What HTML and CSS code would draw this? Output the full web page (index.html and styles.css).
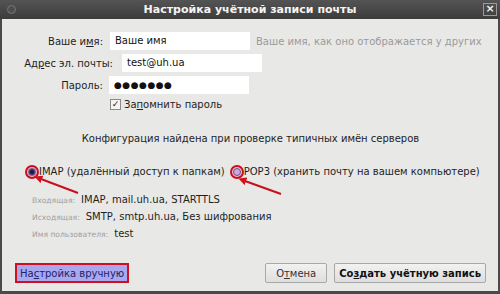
FILE: index.html
```html
<!DOCTYPE html>
<html lang="ru">
<head>
    <meta charset="UTF-8">
    <title>Настройка учётной записи почты</title>
    <link rel="stylesheet" href="styles.css">
</head>
<body>
    <div class="window">
        <div class="titlebar">
            <span class="win-dot"></span>
            <span class="win-title">Настройка учётной записи почты</span>
            <span class="win-close">×</span>
        </div>

        <div class="content">
            <div class="form">
                <div class="row row-name">
                    <label class="lbl">Ваше и<u>м</u>я:</label>
                    <div class="field">Ваше имя</div>
                    <span class="hint">Ваше имя, как оно отображается у других</span>
                </div>
                <div class="row row-mail">
                    <label class="lbl">Ад<u>р</u>ес эл. почты:</label>
                    <div class="field">test@uh.ua</div>
                </div>
                <div class="row row-pass">
                    <label class="lbl">Пароль:</label>
                    <div class="field dots">●●●●●●●</div>
                </div>
                <div class="row row-check">
                    <span class="check">✓</span>
                    <span>За<u>п</u>омнить пароль</span>
                </div>
            </div>

            <p class="status">Конфигурация найдена при проверке типичных имён серверов</p>

            <div class="protocols">
                <label class="radio-item">
                    <span class="radio checked"></span>IMAP (удалённый доступ к папкам)
                </label>
                <label class="radio-item pop">
                    <span class="radio"></span>POP3 (хранить почту на вашем компьютере)
                </label>
            </div>

            <div class="servers">
                <div class="srv"><span class="srv-key">Входящая:</span><span>IMAP, mail.uh.ua, STARTTLS</span></div>
                <div class="srv"><span class="srv-key">Исходящая:</span><span>SMTP, smtp.uh.ua, Без шифрования</span></div>
                <div class="srv"><span class="srv-key">Имя пользователя:</span><span>test</span></div>
            </div>

            <div class="footer">
                <button class="btn manual">На<u>с</u>тройка вручную</button>
                <div class="footer-right">
                    <button class="btn">О<u>т</u>мена</button>
                    <button class="btn primary">Со<u>з</u>дать учётную запись</button>
                </div>
            </div>

            <!-- стрелки-пометки поверх формы -->
            <svg class="arrows" width="500" height="294" viewBox="0 0 500 294">
                <defs>
                    <marker id="head" markerUnits="userSpaceOnUse" markerWidth="8" markerHeight="8" refX="1" refY="4" orient="auto">
                        <path d="M0,0 L8,4 L0,8 Z" fill="#d0121f"/>
                    </marker>
                </defs>
                <line x1="78" y1="193" x2="41" y2="179" stroke="#c8101c" stroke-width="2" marker-end="url(#head)"/>
                <line x1="281" y1="194" x2="245" y2="181" stroke="#c8101c" stroke-width="2" marker-end="url(#head)"/>
            </svg>
        </div>
    </div>
</body>
</html>
```

FILE: styles.css
```css
body {
    margin: 0;
    width: 500px;
    height: 294px;
    overflow: hidden;
    font-family: "DejaVu Sans", sans-serif;
    font-size: 10px;
    color: #1e1e1e;
    background: #e8e8e8;
}
u { text-decoration: underline; text-underline-offset: 1px; }

.window {
    width: 500px;
    height: 294px;
    box-sizing: border-box;
    border: 2px solid #4a4a4a;
    border-top: none;
    border-bottom-width: 3px;
    background: #e8e8e7;
    display: flex;
    flex-direction: column;
    position: relative;
}

.titlebar {
    height: 19px;
    margin: 0 -2px;
    background: linear-gradient(#545454, #3c3c3c);
    display: flex;
    align-items: center;
    justify-content: center;
    position: relative;
    color: #f4f4f4;
}
.win-title {
    font-weight: bold;
    font-size: 11px;
}
.win-dot {
    position: absolute;
    left: 7px;
    top: 5px;
    width: 7px;
    height: 7px;
    border-radius: 50%;
    border: 1px solid #777;
    background: #4e4e4e;
}
.win-close {
    position: absolute;
    right: 3px;
    top: 3px;
    width: 12px;
    height: 11px;
    border: 1px solid #9a9a9a;
    font-size: 11px;
    line-height: 10px;
    text-align: center;
    font-weight: bold;
}

.content {
    flex: 1;
    display: flex;
    flex-direction: column;
    padding: 0 12px 0 13px;
}

.form {
    padding-top: 13px;
    display: flex;
    flex-direction: column;
    gap: 4px;
}
.row {
    display: flex;
    align-items: center;
    height: 18px;
}
.lbl { text-align: right; margin-right: 7px; }
.row-name .lbl { width: 88px; }
.row-mail .lbl { width: 98px; margin-right: 9px; }
.row-pass .lbl { width: 88px; margin-right: 6px; }

.field {
    width: 135px;
    height: 18px;
    line-height: 18px;
    background: #fff;
    padding-left: 5px;
    color: #111;
}
.dots { font-size: 9px; letter-spacing: 0.5px; }
.hint { color: #9a9a9a; margin-left: 6px; }

.row-check { padding-left: 95px; height: 14px; margin-top: -1px; }
.check {
    width: 9px;
    height: 9px;
    border: 1px solid #8a8a8a;
    background: #f4f4f4;
    font-size: 9px;
    line-height: 9px;
    text-align: center;
    margin-right: 3px;
}

.status {
    margin: 22px 0 0;
    text-align: center;
}

.protocols {
    margin-top: 22px;
    display: flex;
    align-items: center;
    padding-left: 11px;
}
.radio-item { display: flex; align-items: center; }
.pop { margin-left: 6px; }
.radio {
    width: 6px;
    height: 6px;
    border-radius: 50%;
    background: #c9a8e0;
    border: 1px solid #7a4a8a;
    box-shadow: 0 0 0 1px #e6c0d0, 0 0 0 3px #c8101c;
    margin: 0 3px 0 2px;
}
.radio.checked {
    background: radial-gradient(circle, #1c1c50 40%, #6a5aa0 80%);
}

.servers {
    margin-top: 17px;
    padding-left: 17px;
    display: flex;
    flex-direction: column;
    gap: 3px;
}
.srv { display: flex; align-items: baseline; height: 14px; }
.srv-key {
    font-size: 7.6px;
    color: #a0a0a0;
    margin-right: 6px;
}

.footer {
    margin-top: auto;
    margin-bottom: 8px;
    display: flex;
    align-items: center;
}
.footer-right {
    margin-left: auto;
    display: flex;
    gap: 7px;
}
.btn {
    font-family: inherit;
    font-size: 10px;
    height: 20px;
    padding: 0 10px;
    border: 1px solid #a8a8a8;
    border-radius: 2px;
    background: linear-gradient(#f2f2f2, #dedede);
    color: #333;
}
.btn.primary { font-weight: bold; color: #111; padding: 0 4px; }
.manual {
    background: #a8a8f0;
    border: 2px solid #d01020;
    border-radius: 0;
    color: #222266;
    padding: 0 3px;
}

.arrows {
    position: absolute;
    left: -2px;
    top: 0;
    pointer-events: none;
}
```
